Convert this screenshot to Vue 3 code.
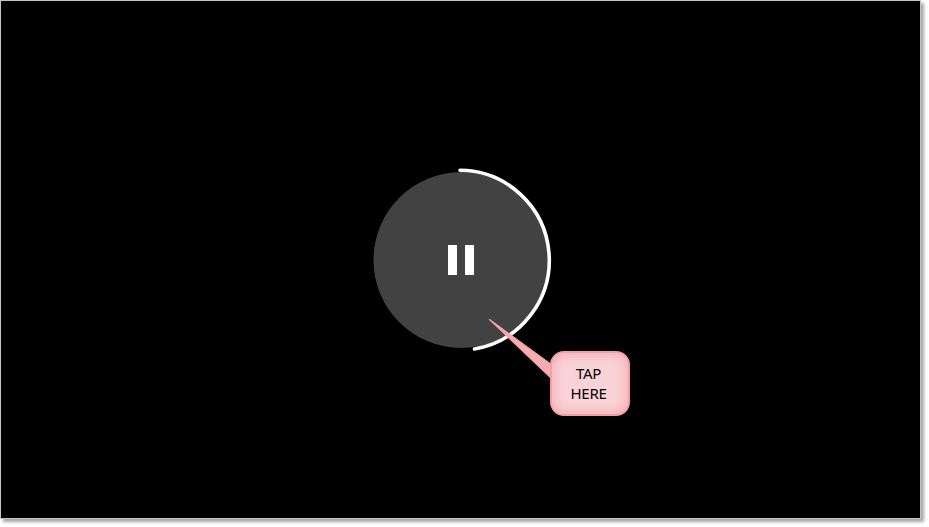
<template>
  <div class="page">
    <div class="frame">
      <div class="player">
        <svg class="ring" viewBox="0 0 184 184" aria-hidden="true">
          <circle cx="92.5" cy="92" r="88" fill="#424242" />
          <path d="M91 2.3 A90 90 0 0 1 105.5 181" fill="none" stroke="#fff" stroke-width="3.6" stroke-linecap="round" />
        </svg>
        <div class="pause" aria-label="Pause">
          <span class="bar"></span>
          <span class="bar"></span>
        </div>
      </div>
      <div class="callout">
        <svg class="tail" viewBox="0 0 70 70" aria-hidden="true">
          <path d="M1.5 1.5 L64 47 L64 61 Z" fill="#f6adb2" stroke="#f3a2a7" stroke-width="1.2" stroke-linejoin="round" />
        </svg>
        <div class="bubble">TAP<br />HERE</div>
      </div>
    </div>
  </div>
</template>

<script setup>
</script>

<style>
html, body { background: #fff; }
</style>

<style scoped>
.page {
  min-height: 527px;
}
.frame {
  position: relative;
  box-sizing: border-box;
  width: 921px;
  height: 519px;
  padding-top: 1px;
  display: flex;
  align-items: center;
  justify-content: center;
  background: #000;
  border: 1px solid #c4c4c4;
  box-shadow: 3px 3px 3px #a8a8a8;
}
.player {
  position: relative;
  width: 184px;
  height: 184px;
  display: flex;
  align-items: center;
  justify-content: center;
}
.ring {
  position: absolute;
  inset: 0;
  width: 184px;
  height: 184px;
}
.pause {
  position: relative;
  display: flex;
  gap: 8px;
}
.bar {
  display: block;
  width: 9px;
  height: 30px;
  background: #fff;
}
.callout {
  position: absolute;
  left: 487px;
  top: 317px;
}
.tail {
  position: absolute;
  left: 0;
  top: 0;
  width: 70px;
  height: 70px;
}
.bubble {
  position: absolute;
  left: 62px;
  top: 33px;
  box-sizing: border-box;
  width: 80px;
  height: 65px;
  padding-right: 3px;
  padding-bottom: 2px;
  display: flex;
  align-items: center;
  justify-content: center;
  text-align: center;
  font-family: "Noto Sans", sans-serif;
  font-size: 15px;
  letter-spacing: -0.25px;
  line-height: 20px;
  color: #000;
  background: #f9d3d7;
  border: 2px solid #f3a0a5;
  border-radius: 14px;
  box-shadow: inset 0 0 12px 2px #f5adb2;
}
</style>
